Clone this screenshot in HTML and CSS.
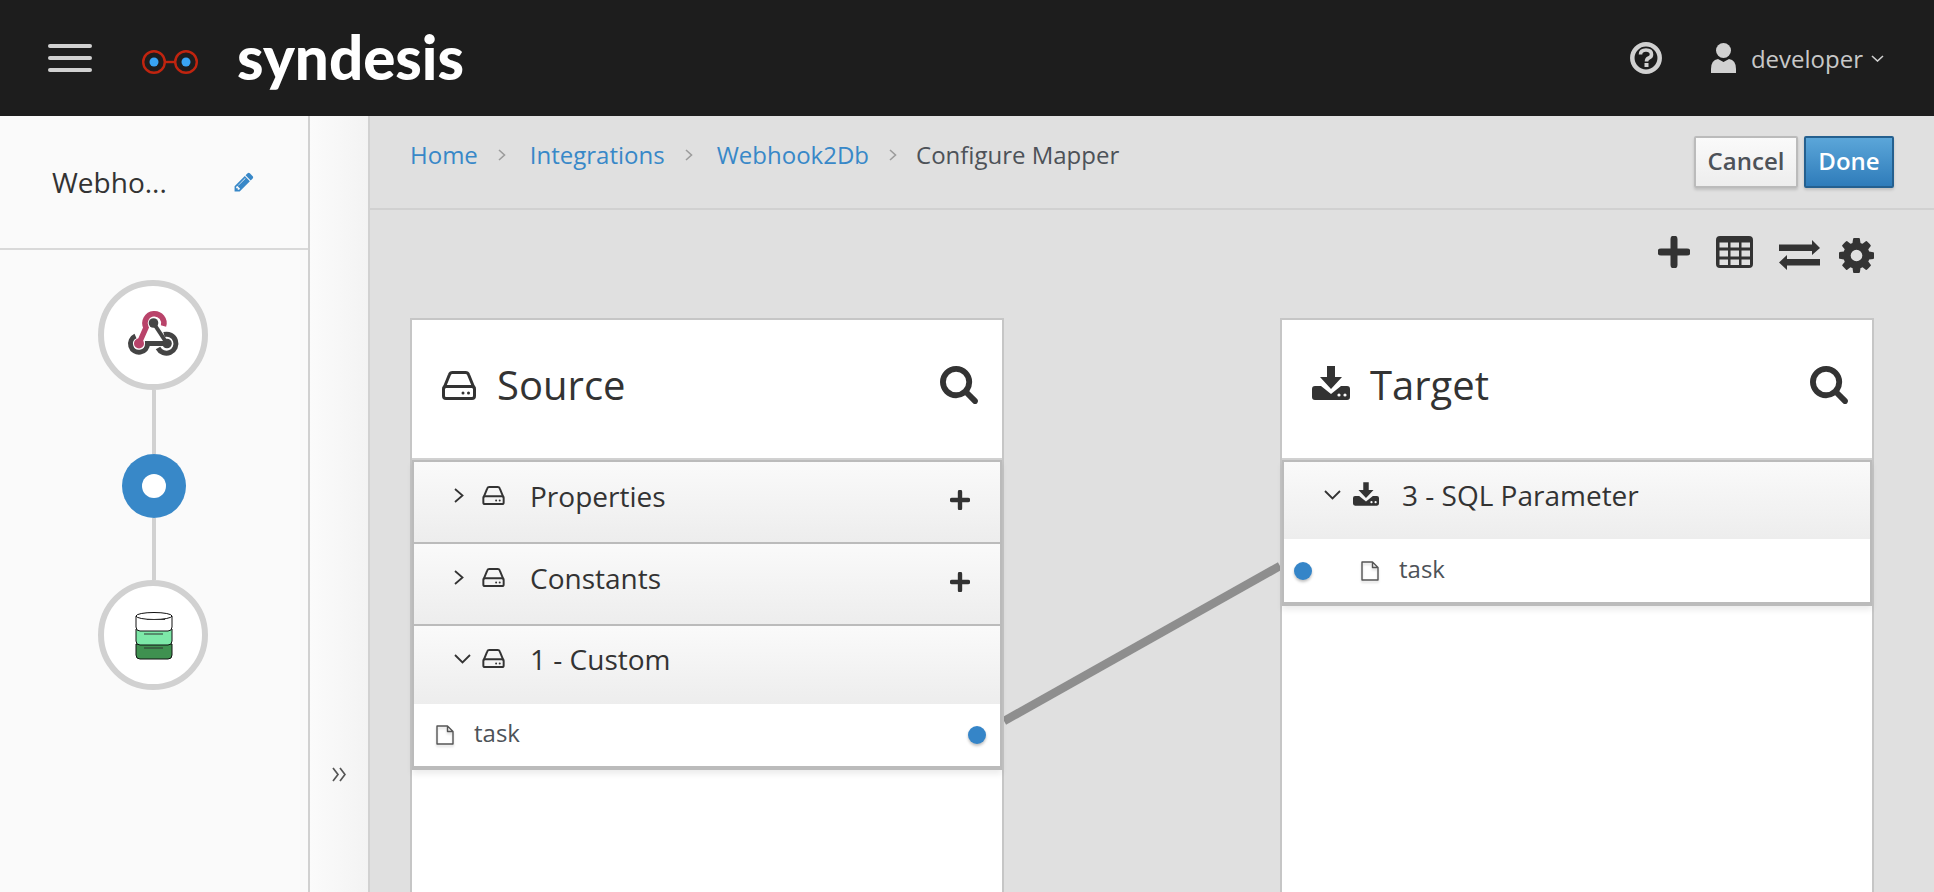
FILE: index.html
```html
<!DOCTYPE html>
<html lang="en">
<head>
  <meta charset="UTF-8" />
  <title>Syndesis – Configure Mapper</title>
  <link rel="stylesheet" href="styles.css">
</head>
<body>
  <svg class="defs" width="0" height="0">
    <defs>
      <symbol id="drive" viewBox="0 0 34 29">
        <path d="M2 17 L7.5 3.5 Q8.2 1.5 10.5 1.5 H23.5 Q25.8 1.5 26.5 3.5 L32 17" fill="none" stroke="currentColor" stroke-width="3"/>
        <rect x="1.5" y="15.5" width="31" height="12" rx="2.5" fill="none" stroke="currentColor" stroke-width="3"/>
        <circle cx="21" cy="22" r="1.5" fill="currentColor"/>
        <circle cx="26.5" cy="22" r="1.5" fill="currentColor"/>
      </symbol>
      <symbol id="download" viewBox="0 0 38 34">
        <path d="M15 0 H23 V11 H30 L19 23 L8 11 H15 Z" fill="currentColor"/>
        <path d="M3 20 H9 L19 28 L29 20 H35 Q38 20 38 23 V31 Q38 34 35 34 H3 Q0 34 0 31 V23 Q0 20 3 20 Z" fill="currentColor"/>
        <circle cx="27" cy="29" r="1.6" fill="#fff"/>
        <circle cx="33" cy="29" r="1.6" fill="#fff"/>
      </symbol>
      <symbol id="search" viewBox="64 128 1664 1664">
        <path d="M1216 832q0-185-131.5-316.5t-316.5-131.5-316.5 131.5-131.5 316.5 131.5 316.5 316.5 131.5 316.5-131.5 131.5-316.5zm512 832q0 52-38 90t-90 38q-54 0-90-38l-343-342q-179 124-399 124-143 0-273.5-55.5t-225-150-150-225-55.5-273.5 55.5-273.5 150-225 225-150 273.5-55.5 273.5 55.5 225 150 150 225 55.5 273.5q0 220-124 399l343 343q37 37 37 90z" fill="currentColor"/>
      </symbol>
      <symbol id="plus" viewBox="0 0 32 32">
        <path d="M16 3 V29 M3 16 H29" fill="none" stroke="currentColor" stroke-width="7" stroke-linecap="round"/>
      </symbol>
      <symbol id="file" viewBox="0 0 18 20">
        <path d="M1 1 H11.5 L17 6.5 V19 H1 Z M11.5 1 V6.5 H17" fill="none" stroke="currentColor" stroke-width="1.4" stroke-linejoin="round"/>
      </symbol>
    </defs>
  </svg>

  <header class="topbar">
    <div class="burger"><span></span><span></span><span></span></div>
    <svg class="logo-mark" width="56" height="24" viewBox="0 0 56 24">
      <circle cx="12" cy="12" r="10.8" fill="none" stroke="#c0240f" stroke-width="2.4"/>
      <circle cx="44" cy="12" r="10.8" fill="none" stroke="#c0240f" stroke-width="2.4"/>
      <path d="M22.5 12 H33.5" stroke="#c0240f" stroke-width="2.4"/>
      <circle cx="12" cy="12" r="4.5" fill="#39a5f5"/>
      <circle cx="44" cy="12" r="4.5" fill="#39a5f5"/>
    </svg>
    <span class="wordmark">syndesis</span>
    <div class="topbar-right">
      <svg class="help" width="32" height="32" viewBox="0 0 32 32">
        <circle cx="16" cy="16" r="13.7" fill="none" stroke="#d1d1d1" stroke-width="4.5"/>
        <path d="M10.5 12.5 Q10.5 8 16 8 Q21.5 8 21.5 12.5 Q21.5 15 18.8 16 Q16.5 17 16.5 19.5" fill="none" stroke="#d1d1d1" stroke-width="3.6"/>
        <rect x="14.5" y="21" width="4" height="4" fill="#d1d1d1"/>
      </svg>
      <svg class="user" width="25" height="30" viewBox="0 0 25 30">
        <circle cx="12.5" cy="7.5" r="7.5" fill="#d1d1d1"/>
        <path d="M0 30 V26 Q0 17 7 16 L12.5 19 L18 16 Q25 17 25 26 V30 Z" fill="#d1d1d1"/>
      </svg>
      <span class="username">developer</span>
      <svg class="caret" width="13" height="7" viewBox="0 0 13 7">
        <path d="M1 1 L6.5 6 L12 1" fill="none" stroke="#d1d1d1" stroke-width="1.6"/>
      </svg>
    </div>
  </header>

  <div class="layout">
    <aside class="sidebar">
      <div class="sidebar-title">
        <span class="flow-name">Webho...</span>
        <svg class="pencil" width="22" height="22" viewBox="0 0 1792 1792">
          <path d="M491 1536l91-91-235-235-91 91v107h128v128h107zm523-928q0-22-22-22-10 0-17 7l-542 542q-7 7-7 17 0 22 22 22 10 0 17-7l542-542q7-7 7-17zm-54-192l416 416-832 832h-416v-416zm683 96q0 53-37 90l-166 166-416-416 166-165q36-38 90-38 53 0 91 38l235 234q37 39 37 91z" fill="#3888c8"/>
        </svg>
      </div>
      <div class="steps">
        <div class="step">
          <svg class="step-icon" width="60" height="60" viewBox="0 0 60 60">
            <path d="M38.5 21 A9.5 9.5 0 1 0 21 22.5 L14 38.5" fill="none" stroke="#b9436a" stroke-width="5.5"/>
            <circle cx="14" cy="38.5" r="5" fill="#b9436a"/>
            <path d="M28.5 18 L42 38.5" stroke="#444" stroke-width="4"/>
            <circle cx="28.5" cy="18" r="4.8" fill="#444"/>
            <path d="M10.5 31 A8.5 8.5 0 1 0 22.5 38.5 H42" fill="none" stroke="#444" stroke-width="5"/>
            <path d="M39 29.5 A9.5 9.5 0 1 1 33 43" fill="none" stroke="#444" stroke-width="5"/>
            <circle cx="42" cy="38.5" r="4.8" fill="#444"/>
          </svg>
        </div>
        <div class="step-line"></div>
        <div class="step-current"><span></span></div>
        <div class="step-line short"></div>
        <div class="step">
          <svg class="step-icon" width="60" height="60" viewBox="0 0 60 60">
            <path d="M11 39 V50 Q11 54 15 54 H43 Q47 54 47 50 V39 Z" fill="#3f9150" stroke="#111" stroke-width="1"/>
            <path d="M11 24 V36 Q11 40 15 40 H43 Q47 40 47 36 V24 Z" fill="#7de8a8" stroke="#111" stroke-width="1"/>
            <path d="M11 11 V22 Q11 26 15 26 H43 Q47 26 47 22 V11 Z" fill="#fff" stroke="#111" stroke-width="1"/>
            <ellipse cx="29" cy="11" rx="18" ry="3.5" fill="#fff" stroke="#111" stroke-width="1"/>
            <path d="M22 14.5 H40 M19 29 H38 M19 43 H38" stroke="#333" stroke-width="1"/>
          </svg>
        </div>
      </div>
    </aside>

    <div class="collapse-col">
      <svg width="14" height="15" viewBox="0 0 14 15">
        <path d="M1 1 L6 7.5 L1 14 M8 1 L13 7.5 L8 14" fill="none" stroke="#555" stroke-width="1.7"/>
      </svg>
    </div>

    <main class="main">
      <div class="crumbbar">
        <nav class="crumbs">
          <a href="#">Home</a>
          <svg class="crumb-sep" width="8" height="12" viewBox="0 0 8 12"><path d="M1 1 L6.5 6 L1 11" fill="none" stroke="#9c9c9c" stroke-width="1.6"/></svg>
          <a href="#">Integrations</a>
          <svg class="crumb-sep" width="8" height="12" viewBox="0 0 8 12"><path d="M1 1 L6.5 6 L1 11" fill="none" stroke="#9c9c9c" stroke-width="1.6"/></svg>
          <a href="#">Webhook2Db</a>
          <svg class="crumb-sep" width="8" height="12" viewBox="0 0 8 12"><path d="M1 1 L6.5 6 L1 11" fill="none" stroke="#9c9c9c" stroke-width="1.6"/></svg>
          <span class="crumb-current">Configure Mapper</span>
        </nav>
        <div class="crumb-actions">
          <button class="btn btn-cancel">Cancel</button>
          <button class="btn btn-done">Done</button>
        </div>
      </div>

      <div class="canvas">
        <svg class="mapping-line" width="276" height="190" viewBox="0 0 276 190">
          <line x1="0" y1="171" x2="276" y2="16" stroke="#8e8e8e" stroke-width="8.5"/>
        </svg>

        <div class="toolbar">
          <svg class="tool" width="32" height="32"><use href="#plus"/></svg>
          <svg class="tool" width="37" height="32" viewBox="0 0 37 32">
            <path d="M4 0 H33 Q37 0 37 4 V28 Q37 32 33 32 H4 Q0 32 0 28 V4 Q0 0 4 0 Z M3.5 6.5 V11.5 H12 V6.5 Z M14.5 6.5 V11.5 H23 V6.5 Z M25.5 6.5 V11.5 H34 V6.5 Z M3.5 14.5 V20.5 H12 V14.5 Z M14.5 14.5 V20.5 H23 V14.5 Z M25.5 14.5 V20.5 H34 V14.5 Z M3.5 23.5 V29 H12 V23.5 Z M14.5 23.5 V29 H23 V23.5 Z M25.5 23.5 V29 H34 V23.5 Z" fill="currentColor" fill-rule="evenodd"/>
          </svg>
          <svg class="tool tool-swap" width="41" height="30" viewBox="0 0 41 30">
            <path d="M0 4.5 H33 V0 L41 8 L33 15 V11 H0 Z M41 19 H8 V15 L0 22.5 L8 30 V25.5 H41 Z" fill="currentColor"/>
          </svg>
          <svg class="tool tool-gear" width="35" height="35" viewBox="0 0 1536 1536">
            <path d="M1024 768q0-106-75-181t-181-75-181 75-75 181 75 181 181 75 181-75 75-181zm512-109v222q0 12-8 23t-20 13l-185 28q-19 54-39 91 35 50 107 138 10 12 10 25t-9 23q-27 37-99 108t-94 71q-12 0-26-9l-138-108q-44 23-91 38-16 136-29 186-7 28-36 28h-222q-14 0-24.5-8.5t-11.5-21.5l-28-184q-49-16-90-37l-141 107q-10 9-25 9-14 0-25-11-126-114-165-168-7-10-7-23 0-12 8-23 15-21 51-66.5t54-70.5q-27-50-41-99l-183-27q-13-2-21-12.5t-8-23.5v-222q0-12 8-23t19-13l186-28q14-46 39-92-40-57-107-138-10-12-10-24 0-10 9-23 26-36 98.5-107.5t94.5-71.5q13 0 26 10l138 107q44-23 91-38 16-136 29-186 7-28 36-28h222q14 0 24.5 8.5t11.5 21.5l28 184q49 16 90 37l142-107q9-9 24-9 13 0 25 10 129 119 165 170 7 8 7 22 0 12-8 23-15 21-51 66.5t-54 70.5q26 50 41 98l183 28q13 2 21 12.5t8 23.5z" fill="currentColor"/>
          </svg>
        </div>

        <div class="panels">
          <section class="panel">
            <div class="panel-head">
              <svg class="panel-icon" width="34" height="29"><use href="#drive"/></svg>
              <h2>Source</h2>
              <svg class="panel-search" width="38" height="38"><use href="#search"/></svg>
            </div>
            <div class="doc-group">
              <div class="doc-row">
                <svg class="chev-right" width="10" height="15" viewBox="0 0 10 15"><path d="M1 1 L8.5 7.5 L1 14" fill="none" stroke="#333" stroke-width="1.8"/></svg>
                <svg class="doc-icon" width="25" height="19"><use href="#drive"/></svg>
                <span class="doc-name">Properties</span>
                <svg class="doc-add" width="20" height="20"><use href="#plus"/></svg>
              </div>
              <div class="doc-row">
                <svg class="chev-right" width="10" height="15" viewBox="0 0 10 15"><path d="M1 1 L8.5 7.5 L1 14" fill="none" stroke="#333" stroke-width="1.8"/></svg>
                <svg class="doc-icon" width="25" height="19"><use href="#drive"/></svg>
                <span class="doc-name">Constants</span>
                <svg class="doc-add" width="20" height="20"><use href="#plus"/></svg>
              </div>
              <div class="doc-row open">
                <svg class="chev-down" width="17" height="10" viewBox="0 0 17 10"><path d="M1 1 L8.5 8.5 L16 1" fill="none" stroke="#333" stroke-width="1.8"/></svg>
                <svg class="doc-icon" width="25" height="19"><use href="#drive"/></svg>
                <span class="doc-name">1 - Custom</span>
              </div>
              <div class="field-row">
                <svg class="file-icon" width="18" height="20"><use href="#file"/></svg>
                <span class="field-name">task</span>
                <span class="dot dot-right"></span>
              </div>
            </div>
          </section>

          <section class="panel">
            <div class="panel-head">
              <svg class="panel-icon target" width="38" height="34"><use href="#download"/></svg>
              <h2 class="target-title">Target</h2>
              <svg class="panel-search" width="38" height="38"><use href="#search"/></svg>
            </div>
            <div class="doc-group">
              <div class="doc-row open target-row">
                <svg class="chev-down" width="17" height="10" viewBox="0 0 17 10"><path d="M1 1 L8.5 8.5 L16 1" fill="none" stroke="#333" stroke-width="1.8"/></svg>
                <svg class="doc-icon-dl" width="26" height="24"><use href="#download"/></svg>
                <span class="doc-name">3 - SQL Parameter</span>
              </div>
              <div class="field-row target-field">
                <span class="dot"></span>
                <svg class="file-icon" width="18" height="20"><use href="#file"/></svg>
                <span class="field-name">task</span>
              </div>
            </div>
          </section>
        </div>
      </div>
    </main>
  </div>
</body>
</html>
```

FILE: styles.css
```css
* {
  box-sizing: border-box;
}

html, body {
  margin: 0;
  height: 100%;
  overflow: hidden;
}

body {
  display: flex;
  flex-direction: column;
  font-family: "Open Sans", sans-serif;
  color: #333;
  background-color: #e0e0e0;
}

.defs {
  position: absolute;
}

svg {
  display: block;
  flex-shrink: 0;
}

/* top bar */
.topbar {
  height: 116px;
  flex-shrink: 0;
  display: flex;
  align-items: center;
  padding: 0 50px 0 48px;
  background-color: #1d1d1d;
}

.burger {
  display: flex;
  flex-direction: column;
  gap: 8px;
  width: 44px;
}

.burger span {
  height: 4px;
  border-radius: 2px;
  background-color: #d1d1d1;
}

.logo-mark {
  margin-left: 50px;
  margin-top: 8px;
}

.wordmark {
  margin-left: 39px;
  font-family: "Lato", sans-serif;
  font-weight: 900;
  font-size: 60px;
  line-height: 1;
  color: #fff;
  margin-top: -2px;
}

.topbar-right {
  margin-left: auto;
  display: flex;
  align-items: center;
  color: #d1d1d1;
}

.user {
  margin-left: 49px;
}

.username {
  margin-left: 15px;
  font-size: 24px;
  color: #c8c8c8;
}

.caret {
  margin-left: 8px;
}

/* layout */
.layout {
  flex: 1;
  display: flex;
  min-height: 0;
}

.sidebar {
  width: 310px;
  flex-shrink: 0;
  background-color: #fafafa;
  border-right: 2px solid #d1d1d1;
}

.sidebar-title {
  height: 134px;
  display: flex;
  align-items: center;
  padding-left: 52px;
  border-bottom: 2px solid #d9d9d9;
}

.flow-name {
  font-size: 28px;
  width: 181px;
}

.steps {
  display: flex;
  flex-direction: column;
  align-items: center;
  padding-top: 30px;
}

.step {
  width: 110px;
  height: 110px;
  margin-left: -2px;
  border: 6px solid #d1d1d1;
  border-radius: 50%;
  background-color: #fff;
  display: flex;
  align-items: center;
  justify-content: center;
}

.step-icon {
  margin-left: 4px;
}

.step-line {
  width: 4px;
  height: 64px;
  background-color: #d1d1d1;
}

.step-line.short {
  height: 62px;
}

.step-current {
  width: 64px;
  height: 64px;
  border-radius: 50%;
  background-color: #3888c8;
  display: flex;
  align-items: center;
  justify-content: center;
}

.step-current span {
  width: 24px;
  height: 24px;
  border-radius: 50%;
  background-color: #fff;
}

.collapse-col {
  width: 60px;
  flex-shrink: 0;
  display: flex;
  justify-content: center;
  align-items: flex-end;
  padding-bottom: 110px;
  background: linear-gradient(to right, #fbfbfb, #f3f3f3);
  border-right: 2px solid #d1d1d1;
}

/* breadcrumb */
.main {
  flex: 1;
  min-width: 0;
  display: flex;
  flex-direction: column;
  background-color: #e0e0e0;
}

.crumbbar {
  height: 94px;
  flex-shrink: 0;
  display: flex;
  justify-content: space-between;
  padding: 15px 40px 0 40px;
  border-bottom: 2px solid #d1d1d1;
}

.crumbs {
  display: flex;
  align-items: center;
  height: 33px;
  margin-top: 7px;
  font-size: 24px;
  color: #4d5258;
}

.crumbs a {
  color: #3888c8;
  text-decoration: none;
}

.crumb-sep {
  margin: 0 24px 0 20px;
}

.crumb-current {
  margin-left: -5px;
}

.crumb-actions {
  display: flex;
  gap: 6px;
  padding-top: 5px;
}

.btn {
  height: 52px;
  padding: 0 0 4px;
  font-family: inherit;
  font-size: 24px;
  font-weight: 600;
  border-radius: 2px;
  box-shadow: 0 2px 3px rgba(0, 0, 0, 0.15);
}

.btn-cancel {
  width: 104px;
  color: #4d5258;
  border: 2px solid #bbb;
  background: linear-gradient(#fafafa, #ededed);
}

.btn-done {
  width: 90px;
  color: #fff;
  border: 2px solid #25608f;
  background: linear-gradient(#5ba6d9, #2f7cba);
}

/* canvas */
.canvas {
  flex: 1;
  min-height: 0;
  position: relative;
  display: flex;
  flex-direction: column;
}

.mapping-line {
  position: absolute;
  left: 634px;
  top: 340px;
}

.toolbar {
  height: 108px;
  flex-shrink: 0;
  display: flex;
  justify-content: flex-end;
  align-items: flex-start;
  gap: 26px;
  padding: 26px 60px 0 0;
  color: #333;
}

.tool-swap {
  margin-top: 4px;
}

.tool-gear {
  margin: 2px 0 0 -7px;
}

.panels {
  flex: 1;
  min-height: 0;
  display: flex;
  justify-content: space-between;
  padding: 0 60px 0 40px;
}

.panel {
  position: relative;
  width: 594px;
  background-color: #fff;
  border: 2px solid #c6c6c6;
  border-bottom: none;
}

.panel-head {
  height: 140px;
  display: flex;
  align-items: center;
  padding: 0 24px 8px 30px;
  border-bottom: 2px solid #d1d1d1;
}

.panel-head h2 {
  margin: -2px 0 0 21px;
  font-size: 40px;
  font-weight: 400;
}

.panel-head .target-title {
  margin-left: 20px;
}

.panel-icon.target {
  margin-top: -4px;
}

.panel-search {
  margin-left: auto;
}

.doc-group {
  border: 2px solid #bbb;
  border-bottom-width: 4px;
  box-shadow: 0 4px 6px rgba(0, 0, 0, 0.08);
}

.doc-row {
  height: 82px;
  display: flex;
  align-items: center;
  padding: 0 30px 8px 40px;
  background: linear-gradient(#fafafa, #ededed);
  border-bottom: 2px solid #bbb;
}

.doc-row.open {
  height: 78px;
  border-bottom: none;
  padding-left: 40px;
}

.doc-row.target-row {
  height: 77px;
}

.chev-right {
  margin: -5px 17px 0 0;
}

.chev-down {
  margin: -4px 10px 0 0;
}

.doc-icon {
  margin-top: -5px;
}

.doc-icon-dl {
  margin-left: 2px;
  margin-top: -5px;
}

.doc-name {
  margin-left: 24px;
  font-size: 28px;
  margin-top: -5px;
}

.target-row .doc-name {
  margin-left: 23px;
  margin-top: -3px;
}

.doc-add {
  margin: 4px 0 0 auto;
}

.field-row {
  height: 62px;
  display: flex;
  align-items: center;
  padding: 0 14px 0 22px;
  background-color: #fff;
}

.field-row.target-field {
  height: 63px;
  padding-left: 10px;
}

.target-field .file-icon {
  margin-left: 49px;
}

.file-icon {
  color: #555;
  filter: drop-shadow(0 2px 1px rgba(0, 0, 0, 0.15));
}

.field-name {
  margin-left: 20px;
  font-size: 24px;
  color: #4d5258;
  margin-top: -6px;
}

.target-field .field-name {
  margin-top: -4px;
}

.dot {
  width: 18px;
  height: 18px;
  border-radius: 50%;
  background-color: #3585c8;
  box-shadow: 0 2px 3px rgba(0, 0, 0, 0.25);
}

.dot-right {
  margin-left: auto;
}
```
